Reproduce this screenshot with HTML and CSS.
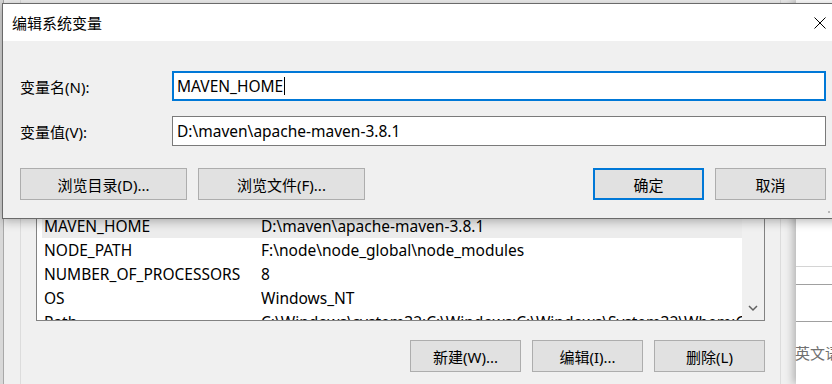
FILE: index.html
```html
<!DOCTYPE html>
<html lang="zh-CN">
<head>
    <meta charset="UTF-8">
    <title>编辑系统变量</title>
    <link rel="stylesheet" href="styles.css">
</head>
<body>
    <div class="screen">
        <!-- 后面的环境变量窗口 -->
        <div class="back">
            <div class="back-edge"></div>
            <div class="group">
                <div class="var-list">
                    <div class="var-rows">
                        <div class="var-row selected"><span>MAVEN_HOME</span><span>D:\maven\apache-maven-3.8.1</span></div>
                        <div class="var-row"><span>NODE_PATH</span><span>F:\node\node_global\node_modules</span></div>
                        <div class="var-row"><span>NUMBER_OF_PROCESSORS</span><span>8</span></div>
                        <div class="var-row"><span>OS</span><span>Windows_NT</span></div>
                        <div class="var-row"><span>Path</span><span>C:\Windows\system32;C:\Windows;C:\Windows\System32\Wbem;C:\Windows\System32\WindowsPowerShell\v1.0\</span></div>
                    </div>
                    <div class="scrollbar">
                        <svg width="10" height="7" viewBox="0 0 10 7"><path d="M1 1 L5 5 L9 1" fill="none" stroke="#606060" stroke-width="1.5"/></svg>
                    </div>
                </div>
                <div class="back-actions">
                    <button class="btn">新建(W)...</button>
                    <button class="btn">编辑(I)...</button>
                    <button class="btn">删除(L)</button>
                </div>
            </div>
        </div>

        <!-- 右侧的设置窗口 -->
        <div class="side-window">
            <div class="side-field"></div>
            <div class="side-line"></div>
            <div class="side-text">英文语言</div>
        </div>

        <!-- 编辑系统变量 对话框 -->
        <div class="dialog">
            <div class="titlebar">
                <span class="title">编辑系统变量</span>
                <span class="close">
                    <svg width="12" height="12" viewBox="0 0 12 12"><path d="M0.5 0.5 L11.5 11.5 M11.5 0.5 L0.5 11.5" stroke="#000" stroke-width="1"/></svg>
                </span>
            </div>
            <div class="dialog-body">
                <div class="form">
                    <label class="label">变量名(N):</label>
                    <div class="field focused">MAVEN_HOME<span class="caret"></span></div>
                    <label class="label">变量值(V):</label>
                    <div class="field">D:\maven\apache-maven-3.8.1</div>
                </div>
                <div class="dialog-actions">
                    <button class="btn wide">浏览目录(D)...</button>
                    <button class="btn wide">浏览文件(F)...</button>
                    <button class="btn default push">确定</button>
                    <button class="btn">取消</button>
                </div>
            </div>
            <svg class="grip" width="12" height="12" viewBox="0 0 12 12">
                <rect x="8" y="0" width="2" height="2" fill="#b8b8b8"/>
                <rect x="4" y="4" width="2" height="2" fill="#b8b8b8"/>
                <rect x="8" y="4" width="2" height="2" fill="#b8b8b8"/>
                <rect x="0" y="8" width="2" height="2" fill="#b8b8b8"/>
                <rect x="4" y="8" width="2" height="2" fill="#b8b8b8"/>
                <rect x="8" y="8" width="2" height="2" fill="#b8b8b8"/>
            </svg>
        </div>
    </div>
</body>
</html>
```

FILE: styles.css
```css
body {
    margin: 0;
    padding: 0;
    font-family: 'Noto Sans', 'Noto Sans CJK SC', sans-serif;
    font-size: 15.5px;
    color: #000;
    background-color: #f0f0f0;
}

.screen {
    position: relative;
    width: 832px;
    height: 384px;
    overflow: hidden;
    background-color: #f0f0f0;
}

/* 后面的窗口 */
.back {
    display: flex;
    height: 384px;
}

.back-edge {
    width: 3px;
    background-color: #d8d8d8;
    border-right: 1px solid #a8a8a8;
}

.group {
    width: 761px;
    box-sizing: border-box;
    margin-left: 16px;
    padding: 213px 15px 0 15px;
    border-left: 1px solid #dcdcdc;
    border-right: 1px solid #dcdcdc;
}

.var-list {
    display: flex;
    height: 108px;
    box-sizing: border-box;
    border: 1px solid #828282;
    background-color: #fff;
}

.var-rows {
    flex: 1;
    overflow: hidden;
    padding-left: 5px;
}

.var-row {
    display: grid;
    grid-template-columns: 217px 1fr;
    height: 24px;
    line-height: 24px;
    padding-left: 2px;
    white-space: nowrap;
}

.var-row span {
    overflow: hidden;
}

.var-row.selected {
    background-color: #ececec;
}

.scrollbar {
    width: 22px;
    background-color: #f0f0f0;
    display: flex;
    align-items: flex-end;
    justify-content: center;
    padding-bottom: 8px;
    box-sizing: border-box;
}

.back-actions {
    display: flex;
    justify-content: flex-end;
    gap: 11px;
    margin-top: 19px;
}

.back-actions .btn {
    width: 111px;
}

/* 按钮 */
.btn {
    height: 32px;
    width: 111px;
    padding: 0;
    border: 1px solid #adadad;
    background-color: #e1e1e1;
    font-family: inherit;
    font-size: 15px;
    color: #000;
}

.btn.wide {
    width: 167px;
}

.btn.default {
    border: 2px solid #0078d7;
}

.btn.push {
    margin-left: auto;
}

/* 右侧窗口 */
.side-window {
    position: absolute;
    top: 0;
    left: 796px;
    width: 60px;
    height: 384px;
    background-color: #fff;
    box-shadow: -3px 0 8px rgba(0,0,0,0.25);
}

.side-field {
    margin-top: 266px;
    height: 17px;
    border-top: 1px solid #d4d4d4;
    border-bottom: 1px solid #a0a0a0;
}

.side-line {
    margin-top: 36px;
    border-top: 1px solid #a0a0a0;
}

.side-text {
    margin-top: 20px;
    margin-left: -1px;
    font-size: 15px;
    color: #707070;
    white-space: nowrap;
}

/* 对话框 */
.dialog {
    position: absolute;
    top: 3px;
    left: 2px;
    width: 842px;
    box-sizing: border-box;
    border: 1px solid #6a6a6a;
    background-color: #f0f0f0;
    box-shadow: 0 2px 10px rgba(0,0,0,0.3);
}

.titlebar {
    display: flex;
    justify-content: space-between;
    align-items: center;
    height: 37px;
    padding-left: 9px;
    background-color: #fff;
}

.title {
    font-family: 'Noto Sans CJK SC', sans-serif;
    font-size: 15px;
}

.close {
    width: 46px;
    height: 37px;
    display: flex;
    align-items: center;
    justify-content: center;
}

.dialog-body {
    padding: 30px 17px 18px 17px;
}

.form {
    display: grid;
    grid-template-columns: 152px 1fr;
    grid-auto-rows: 30px;
    row-gap: 15px;
    align-items: center;
}

.label {
    font-size: 15px;
}

.field {
    display: flex;
    align-items: center;
    height: 30px;
    box-sizing: border-box;
    padding-left: 4px;
    border: 1px solid #7a7a7a;
    background-color: #fff;
    white-space: nowrap;
}

.field.focused {
    border: 2px solid #0078d7;
    padding-left: 3px;
}

.caret {
    display: inline-block;
    width: 1px;
    height: 18px;
    margin-left: 1px;
    background-color: #000;
}

.dialog-actions {
    display: flex;
    gap: 11px;
    margin-top: 22px;
}

.grip {
    position: absolute;
    right: 3px;
    bottom: 3px;
}
```
